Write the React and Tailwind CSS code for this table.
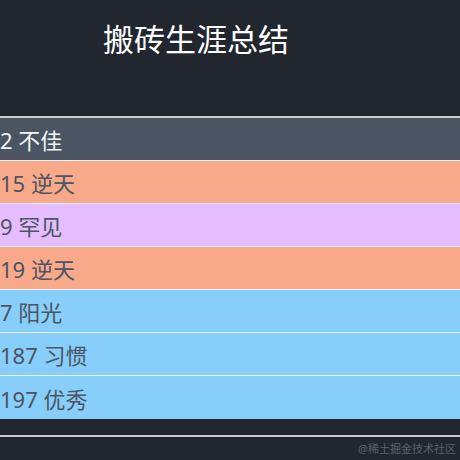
const rows = [
  { text: '2 不佳', bg: 'bg-[#4a5462]', fg: 'text-[#f3f4f6]' },
  { text: '15 逆天', bg: 'bg-[#f8a98a]', fg: 'text-[#4b5563]' },
  { text: '9 罕见', bg: 'bg-[#e5bdfe]', fg: 'text-[#4b5563]' },
  { text: '19 逆天', bg: 'bg-[#f8a98a]', fg: 'text-[#4b5563]' },
  { text: '7 阳光', bg: 'bg-[#87cefa]', fg: 'text-[#4b5563]' },
  { text: '187 习惯', bg: 'bg-[#87cefa]', fg: 'text-[#4b5563]' },
  { text: '197 优秀', bg: 'bg-[#87cefa]', fg: 'text-[#4b5563]' },
];

export default function App() {
  return (
    <div
      className="w-[460px] h-[460px] bg-[#21262f] flex flex-col overflow-hidden"
      style={{ fontFamily: '"Noto Sans", "Noto Sans CJK SC", sans-serif' }}
    >
      <header className="h-[116px] pl-[103px] pt-[19px]">
        <h1 className="text-[31px] leading-[40px] text-white">搬砖生涯总结</h1>
      </header>

      <div className="border-t-2 border-[#c9cdd3]">
        {rows.map((row, i) => (
          <div
            key={i}
            className={`h-[43px] flex items-center ${row.bg} ${row.fg} text-[22px] ${
              i < rows.length - 1 ? 'border-b border-[#eef0f3]' : ''
            }`}
          >
            <span className="mt-[3px]">{row.text}</span>
          </div>
        ))}
      </div>

      <div className="h-[16px]" />
      <div className="border-t-2 border-[#c9cdd3] flex-1 flex items-end justify-end pr-[4px] pb-[3px]">
        <span className="text-[11px] text-[#5b616b] leading-[16px]">@稀土掘金技术社区</span>
      </div>
    </div>
  );
}
